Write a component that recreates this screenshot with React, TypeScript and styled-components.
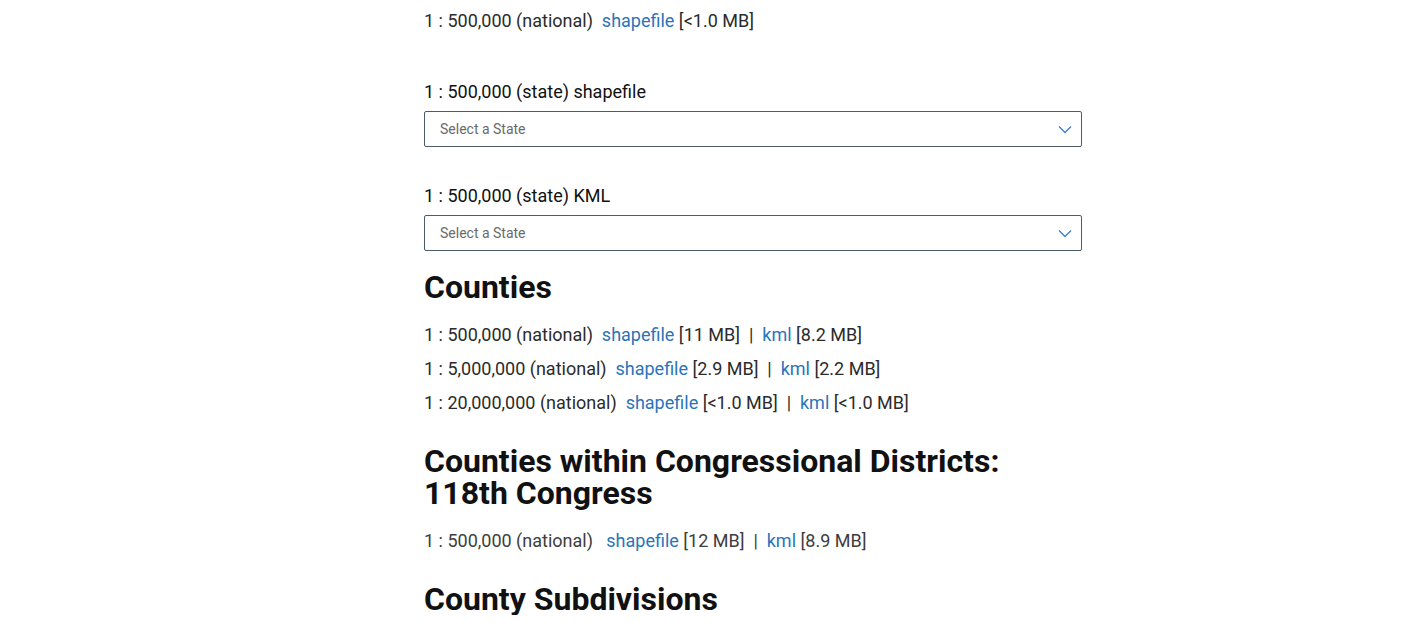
import React from "react";
import styled, { createGlobalStyle } from "styled-components";

const Global = createGlobalStyle`
  html, body { margin: 0; padding: 0; background: #fff; }
  body { font-family: Roboto, "Noto Sans", Arial, sans-serif; }
`;

const Page = styled.main`
  padding: 4px 0 0 424px;
  width: 658px;
`;

const Row = styled.p<{ $mt?: number; $muted?: boolean }>`
  margin: ${(p) => p.$mt ?? 0}px 0 0;
  font-size: 18px;
  line-height: 34px;
  color: ${(p) => (p.$muted ? "#3d3d3d" : "#2b2b2b")};
  white-space: pre;
`;

const Link = styled.a`
  color: #2a74b9;
  text-decoration: none;
`;

const Label = styled.div<{ $mt: number }>`
  margin-top: ${(p) => p.$mt}px;
  font-size: 18px;
  line-height: 24px;
  color: #111;
`;

const SelectBox = styled.div`
  margin-top: 7px;
  height: 36px;
  box-sizing: border-box;
  border: 1px solid #4b5d6a;
  border-radius: 2px;
  display: flex;
  align-items: center;
  justify-content: space-between;
  padding: 0 9px 0 15px;
  font-size: 14px;
  color: #6a6a6a;
`;

const Heading = styled.h2<{ $mt: number }>`
  margin: ${(p) => p.$mt}px 0 0;
  font-size: 32px;
  line-height: 32px;
  font-weight: 700;
  color: #111;
`;

const Chevron = () => (
  <svg width="14" height="9" viewBox="0 0 14 9" fill="none">
    <path d="M1 1.5 L7 7.5 L13 1.5" stroke="#3d7fc4" strokeWidth="1.3" />
  </svg>
);

const Select = () => (
  <SelectBox>
    <span>Select a State</span>
    <Chevron />
  </SelectBox>
);

export default function App() {
  return (
    <>
      <Global />
      <Page>
        <Row>
          {"1 : 500,000 (national)  "}
          <Link href="#">shapefile</Link>
          {" [<1.0 MB]"}
        </Row>
        <Label $mt={42}>1 : 500,000 (state) shapefile</Label>
        <Select />
        <Label $mt={37}>1 : 500,000 (state) KML</Label>
        <Select />
        <Heading $mt={20}>Counties</Heading>
        <Row $mt={15}>
          {"1 : 500,000 (national)  "}
          <Link href="#">shapefile</Link>
          {" [11 MB]  |  "}
          <Link href="#">kml</Link>
          {" [8.2 MB]"}
        </Row>
        <Row>
          {"1 : 5,000,000 (national)  "}
          <Link href="#">shapefile</Link>
          {" [2.9 MB]  |  "}
          <Link href="#">kml</Link>
          {" [2.2 MB]"}
        </Row>
        <Row>
          {"1 : 20,000,000 (national)  "}
          <Link href="#">shapefile</Link>
          {" [<1.0 MB]  |  "}
          <Link href="#">kml</Link>
          {" [<1.0 MB]"}
        </Row>
        <Heading $mt={25}>
          Counties within Congressional Districts:
          <br />
          118th Congress
        </Heading>
        <Row $mt={15} $muted>
          {"1 : 500,000 (national)   "}
          <Link href="#">shapefile</Link>
          {" [12 MB]  |  "}
          <Link href="#">kml</Link>
          {" [8.9 MB]"}
        </Row>
        <Heading $mt={25}>County Subdivisions</Heading>
      </Page>
    </>
  );
}
